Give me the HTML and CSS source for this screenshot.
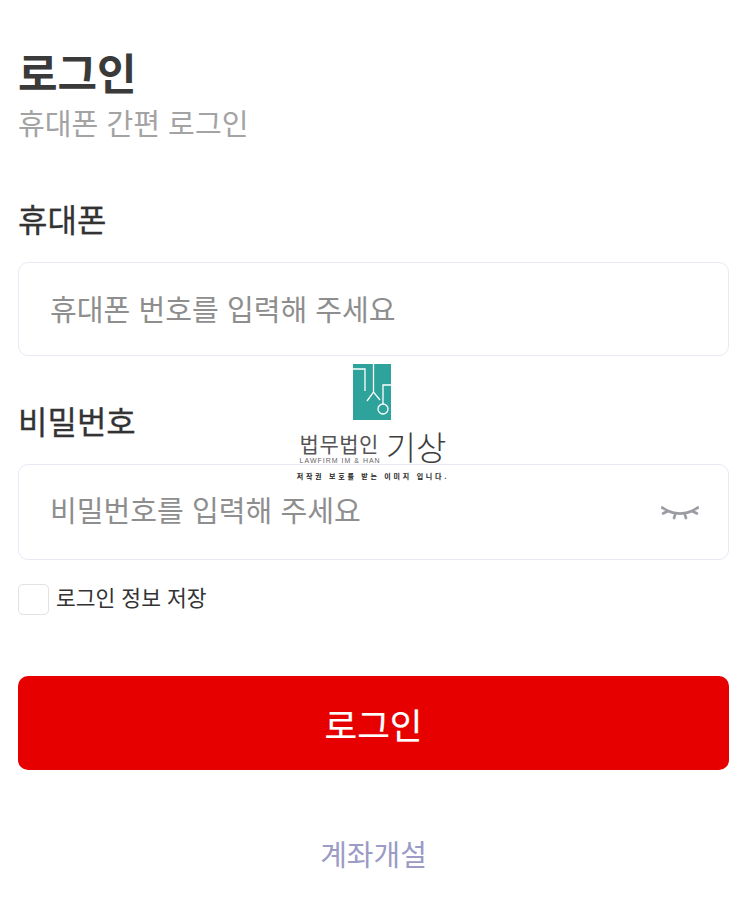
FILE: index.html
```html
<!DOCTYPE html>
<html lang="ko">
<head>
<meta charset="utf-8">
<title>로그인</title>
<link rel="stylesheet" href="styles.css">
</head>
<body>
<main class="page">
  <h1 class="title">로그인</h1>
  <p class="subtitle">휴대폰 간편 로그인</p>
  <label class="label label-phone">휴대폰</label>
  <div class="field field-phone"><span class="placeholder">휴대폰 번호를 입력해 주세요</span></div>
  <label class="label label-pass">비밀번호</label>
  <div class="field field-pass">
    <span class="placeholder">비밀번호를 입력해 주세요</span>
    <svg class="eye" width="38" height="18" viewBox="0 0 38 18" fill="none" stroke="#9a9ba3" stroke-width="2.6" stroke-linecap="round">
      <path d="M1 3.5C3 4.5 5 6 7 7C14 10.5 24 10.5 31 7C33 6 35 4.5 37 3.5"/>
      <path d="M2 9.5L7 7"/><path d="M36 9.5L31 7"/>
      <path d="M13 14L14.5 9.5"/><path d="M25 14L23.5 9.5"/>
    </svg>
  </div>
  <div class="remember"><span class="checkbox"></span><span class="remember-text">로그인 정보 저장</span></div>
  <button class="submit" type="button">로그인</button>
  <a class="link">계좌개설</a>
</main>
<aside class="watermark">
  <svg class="mark" width="38" height="56" viewBox="0 0 38 56" fill="none">
    <rect width="38" height="56" fill="#2ea39c"/>
    <g stroke="#fff" stroke-width="1.3">
      <path d="M0 5H12V27"/><path d="M20.5 0V28"/>
      <path d="M14 37L20.5 28L27 36"/>
      <path d="M38 21H30V40"/><circle cx="30" cy="45" r="5"/>
    </g>
  </svg>
  <div class="brand">
    <div class="brand-left">
      <span class="brand-ko">법무법인</span>
      <span class="brand-en">LAWFIRM IM &amp; HAN</span>
    </div>
    <span class="brand-name">기상</span>
  </div>
  <span class="brand-note">저작권 보호를 받는 이미지 입니다.</span>
</aside>
</body>
</html>
```
FILE: styles.css
```css
* { box-sizing: border-box; }
html, body { margin: 0; padding: 0; background: #fff; }
body { position: relative; width: 743px; height: 898px; overflow: hidden; font-family: "Noto Sans CJK KR", "Noto Sans", sans-serif; }
.page { display: flex; flex-direction: column; padding: 41px 14px 0 18px; }
.title { margin: 0; font-size: 43px; line-height: 60px; font-weight: 700; color: #3a3a3a; }
.subtitle { margin: 1px 0 0; font-size: 29.1px; line-height: 40px; color: #a3a3a3; }
.label { display: block; font-size: 32px; line-height: 44px; font-weight: 400; color: #333; -webkit-text-stroke: 0.3px #333; }
.label-phone { margin-top: 54px; }
.label-pass { margin-top: 42px; }
.field { display: flex; align-items: center; justify-content: space-between; margin-top: 22px; padding: 0 29px 2px 31px; height: 94px; border: 1px solid #e9e8f5; border-radius: 10px; background: #fff; }
.field-pass { height: 96px; padding-bottom: 6px; }
.placeholder { font-size: 29.1px; color: #8e8e8e; }
.eye { display: block; margin-top: 8px; }
.remember { display: flex; align-items: center; gap: 7.5px; height: 31px; margin-top: 24px; }
.checkbox { width: 30.5px; height: 30.5px; border: 1.5px solid #e2e2e2; border-radius: 5px; background: #fff; }
.remember-text { padding-bottom: 6px; font-size: 21.5px; line-height: 28px; color: #333; }
.submit { margin-top: 61px; height: 94px; border: 0; border-radius: 10px; background: #e60000; color: #fff; font: 400 35.5px "Noto Sans CJK KR", sans-serif; -webkit-text-stroke: 0.2px #fff; }
.link { margin-top: 61px; text-align: center; font-size: 29px; line-height: 44px; color: #9b9bc6; }
.watermark { position: absolute; left: 295px; top: 364px; width: 156px; display: flex; flex-direction: column; align-items: center; }
.mark { display: block; margin-left: -2px; }
.brand { display: flex; align-items: flex-end; gap: 5px; margin-top: 7px; }
.brand-left { display: flex; flex-direction: column; }
.brand-ko { font-size: 21px; line-height: 26px; letter-spacing: 0.5px; font-weight: 400; color: #555; }
.brand-en { font-family: "Liberation Sans", sans-serif; font-size: 7px; line-height: 9px; letter-spacing: 1px; color: #666; white-space: nowrap; }
.brand-name { font-size: 33px; line-height: 38px; font-weight: 300; color: #3c3c3c; }
.brand-note { margin-top: 6px; font-size: 7px; line-height: 10px; font-weight: 700; letter-spacing: 2.75px; color: #222; white-space: nowrap; }
```
